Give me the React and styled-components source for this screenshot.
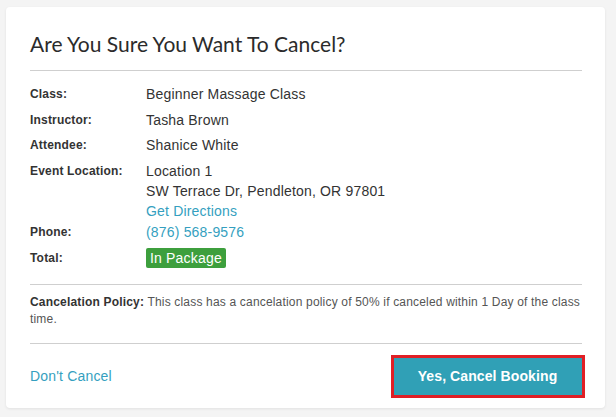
import React from 'react'
import styled, { createGlobalStyle } from 'styled-components'

const GlobalStyle = createGlobalStyle`
  html, body {
    margin: 0;
    padding: 0;
    background: #f4f4f4;
  }
  body {
    font-family: "Liberation Sans", Arial, sans-serif;
    color: #333;
    letter-spacing: 0.18px;
  }
`

const Page = styled.main`
  padding: 7px 11px 9px 6px;
`

const Card = styled.section`
  background: #fff;
  border-radius: 4px;
  box-shadow: 0 1px 3px rgba(0, 0, 0, 0.08);
  padding: 0 23.5px 0 24px;
`

const Header = styled.header`
  padding: 22px 0 12px;
  border-bottom: 1px solid #cfcfcf;
`

const Title = styled.h2`
  margin: 0;
  font-family: Lato, "Open Sans", sans-serif;
  font-weight: 400;
  font-size: 21px;
  line-height: 29px;
  letter-spacing: 0;
  color: #2b2b2b;
`

const Details = styled.div`
  display: grid;
  grid-template-columns: 116px 1fr;
  row-gap: 5.5px;
  padding: 13px 0 16px;
  border-bottom: 1px solid #cfcfcf;
`

const Label = styled.div`
  font-size: 12px;
  font-weight: 700;
  line-height: 20px;
  color: #333;
  margin-bottom: ${p => p.$tight ? '-4px' : '0'};
`

const Value = styled.div`
  font-size: 14px;
  line-height: 20px;
  color: #333;
  margin-bottom: ${p => p.$tight ? '-4px' : '0'};
`

const Line = styled.div``

const Link = styled.a`
  color: #359fc0;
  text-decoration: none;
  font-size: 14px;
  display: ${p => p.$block ? 'block' : 'inline'};
`

const Badge = styled.span`
  display: inline-block;
  background: #3d9f3d;
  color: #fff;
  font-size: 14px;
  line-height: 20px;
  padding: 0 4px;
  border-radius: 2px;
`

const Policy = styled.p`
  margin: 0;
  padding: 9px 0 15px;
  font-size: 12px;
  line-height: 17px;
  color: #555;
  border-bottom: 1px solid #cfcfcf;

  strong {
    color: #333;
  }
`

const Footer = styled.footer`
  display: flex;
  align-items: center;
  justify-content: space-between;
  padding: 14px 0 13px;
`

const CancelButton = styled.button`
  width: 188px;
  height: 37px;
  border: none;
  background: #30a0b6;
  color: #fff;
  font-family: "Liberation Sans", Arial, sans-serif;
  font-size: 14px;
  font-weight: 700;
  letter-spacing: 0.1px;
  outline: 3.5px solid #e01f25;
  cursor: pointer;
`

export default function App() {
  return (
    <Page>
      <GlobalStyle />
      <Card>
        <Header>
          <Title>Are You Sure You Want To Cancel?</Title>
        </Header>
        <Details>
          <Label>Class:</Label>
          <Value>Beginner Massage Class</Value>
          <Label>Instructor:</Label>
          <Value>Tasha Brown</Value>
          <Label>Attendee:</Label>
          <Value>Shanice White</Value>
          <Label $tight>Event Location:</Label>
          <Value $tight>
            <Line>Location 1</Line>
            <Line>SW Terrace Dr, Pendleton, OR 97801</Line>
            <Link href="#" $block>Get Directions</Link>
          </Value>
          <Label>Phone:</Label>
          <Value>
            <Link href="#">(876) 568-9576</Link>
          </Value>
          <Label>Total:</Label>
          <Value>
            <Badge>In Package</Badge>
          </Value>
        </Details>
        <Policy>
          <strong>Cancelation Policy:</strong> This class has a cancelation policy of 50% if canceled within 1 Day of the class time.
        </Policy>
        <Footer>
          <Link href="#">Don't Cancel</Link>
          <CancelButton>Yes, Cancel Booking</CancelButton>
        </Footer>
      </Card>
    </Page>
  )
}
